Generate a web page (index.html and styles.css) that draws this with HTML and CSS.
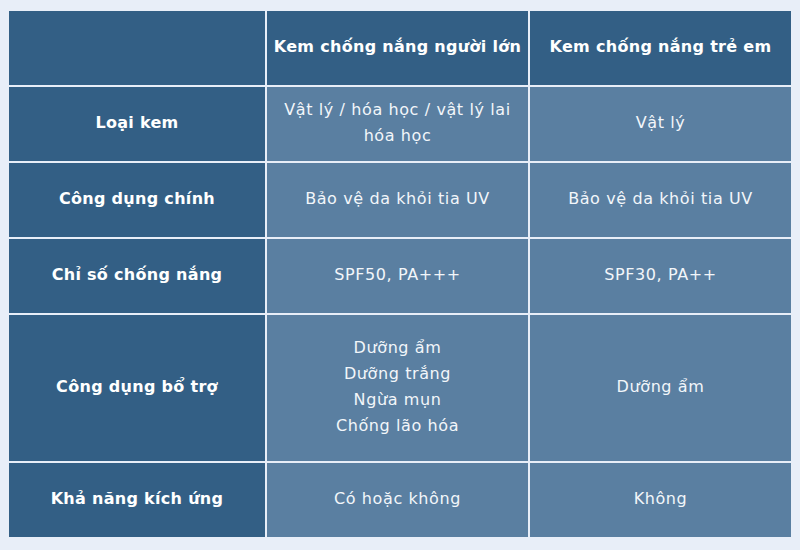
FILE: index.html
```html
<!DOCTYPE html>
<html lang="vi">
<head>
<meta charset="utf-8">
<link rel="stylesheet" href="styles.css">
</head>
<body>
<div class="table">
  <div class="cell head"></div>
  <div class="cell head">Kem chống nắng người lớn</div>
  <div class="cell head">Kem chống nắng trẻ em</div>

  <div class="cell label">Loại kem</div>
  <div class="cell val">Vật lý / hóa học / vật lý lai hóa học</div>
  <div class="cell val">Vật lý</div>

  <div class="cell label">Công dụng chính</div>
  <div class="cell val">Bảo vệ da khỏi tia UV</div>
  <div class="cell val">Bảo vệ da khỏi tia UV</div>

  <div class="cell label">Chỉ số chống nắng</div>
  <div class="cell val">SPF50, PA+++</div>
  <div class="cell val">SPF30, PA++</div>

  <div class="cell label">Công dụng bổ trợ</div>
  <div class="cell val">Dưỡng ẩm<br>Dưỡng trắng<br>Ngừa mụn<br>Chống lão hóa</div>
  <div class="cell val">Dưỡng ẩm</div>

  <div class="cell label">Khả năng kích ứng</div>
  <div class="cell val">Có hoặc không</div>
  <div class="cell val">Không</div>
</div>
</body>
</html>
```

FILE: styles.css
```css
html, body {
  margin: 0;
  background: #e8eef8;
}
body {
  padding: 11px 9px;
  font-family: "DejaVu Sans", sans-serif;
}
.table {
  display: grid;
  grid-template-columns: 256px 261px 261px;
  grid-template-rows: 74px 74px 74px 74px 146px 74px;
  gap: 2px;
  width: 782px;
}
.cell {
  display: flex;
  align-items: center;
  justify-content: center;
  text-align: center;
  padding: 0 5px 3px;
  color: #f2f6fa;
  font-size: 16px;
  line-height: 26px;
  letter-spacing: 0.6px;
}
.head, .label {
  background: #335f85;
  font-weight: bold;
  color: #ffffff;
  letter-spacing: 0.3px;
}
.val {
  background: #5a7fa1;
}
```
